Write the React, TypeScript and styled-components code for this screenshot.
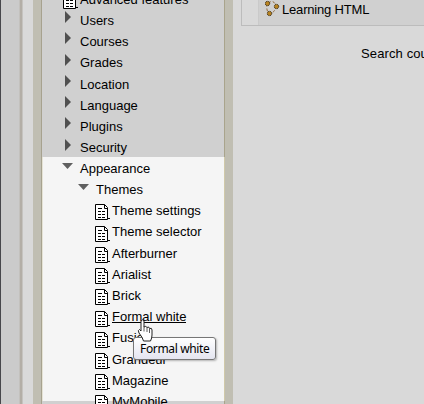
import React from "react";
import styled, { createGlobalStyle } from "styled-components";

const GlobalStyle = createGlobalStyle`
  body { margin: 0; overflow: hidden; }
`;

const Page = styled.div`
  display: flex;
  position: relative;
  width: 424px;
  height: 404px;
  overflow: hidden;
  background: #d9d9d9;
  color: #000;
  font: 13px/21px "Liberation Sans", Arial, sans-serif;
`;

const Strip = styled.div<{ $width: number; $fill: string }>`
  flex: 0 0 ${(p) => p.$width}px;
  background: ${(p) => p.$fill};
`;

const Sidebar = styled.nav`
  flex: 0 0 181px;
  height: 404px;
  overflow: hidden;
  background: #d0d0d0;
`;

const Branch = styled.div`
  margin-top: -12px;
  height: 169px;
`;

const OpenBranch = styled.div`
  height: 247px;
  overflow: hidden;
  background: linear-gradient(#f5f5f5 244px, #d0d0d0 244px);
`;

const Row = styled.div<{ $indent: number }>`
  display: flex;
  height: 21.22px;
  padding-left: ${(p) => p.$indent}px;
  white-space: nowrap;
`;

const IconSlot = styled.span<{ $width: number; $top: number }>`
  flex: 0 0 ${(p) => p.$width}px;
  padding-top: ${(p) => p.$top}px;
  line-height: 0;
`;

const Label = styled.span<{ $underline?: boolean }>`
  height: ${(p) => (p.$underline ? "17px" : "21px")};
  margin-top: 0.7px;
  box-sizing: border-box;
  border-bottom: ${(p) => (p.$underline ? "1px solid #000" : "0")};
`;

const Main = styled.main`
  flex: 1;
  padding-left: 8px;
  overflow: hidden;
`;

const Course = styled.div`
  display: flex;
  box-sizing: border-box;
  height: 26px;
  border: solid #bcbcbc;
  border-width: 0 0 1px 1px;
`;

const CourseCell = styled.div`
  display: flex;
  flex: 1;
  margin-left: 16px;
  padding-left: 6px;
  border-left: 1px solid #cacaca;
  background: #d0d0d0;
`;

const CourseName = styled.span`
  padding-left: 1px;
  margin-top: -1px;
  letter-spacing: -0.18px;
`;

const Search = styled.div`
  padding: 17px 0 0 120px;
  white-space: nowrap;
  letter-spacing: 0.12px;
`;

const Tooltip = styled.div`
  position: absolute;
  left: 133px;
  top: 337px;
  box-sizing: border-box;
  width: 83px;
  height: 23px;
  padding-left: 6px;
  border: 1px solid #767676;
  border-radius: 3px;
  background: linear-gradient(#fff, #e4e5f0);
  box-shadow: 1px 1px 2px #0004;
  font: 12px/22px "Noto Sans", sans-serif;
  letter-spacing: -0.35px;
  white-space: nowrap;
`;

const Pointer = styled.svg`
  position: absolute;
  left: 136px;
  top: 318px;
`;

const PageIcon = () => (
  <svg width="15" height="16" viewBox="0 0 15 16">
    <path d="M.5.5H9.5L12.5 3.5V15.5H.5Z" fill="#fff" stroke="#000" />
    <path d="M9.5.5V4.5H12.5M12 14.5H15" fill="none" stroke="#000" />
    <path d="M3 4.5h4M3 7.5h3M7 7.5h3M3 10.5h3M7 10.5h3M3 13.5h3M7 13.5h3" stroke="#000" />
  </svg>
);

const Closed = () => (
  <svg width="6" height="12"><path d="M0 0L6 6L0 12z" fill="#505050" /></svg>
);

const Opened = () => (
  <svg width="11" height="6"><path d="M0 0h11L5.5 6z" fill="#606060" /></svg>
);

const CourseIcon = () => (
  <svg width="16" height="17" viewBox="0 0 16 17">
    <path d="M3 3Q9-1 11 6Q10 13 4 14Q1 10 2 4" fill="none" stroke="#926b3d" strokeDasharray="3 2" />
    <g fill="#b88320" stroke="#2c210f" strokeDasharray="1 .6">
      <circle cx="2.5" cy="3.5" r="2.2" />
      <circle cx="11.5" cy="6.5" r="2.2" />
      <circle cx="4.5" cy="13.5" r="2.2" />
    </g>
  </svg>
);

const categories = ["Users", "Courses", "Grades", "Location", "Language", "Plugins", "Security"];
const themes = ["Theme settings", "Theme selector", "Afterburner", "Arialist", "Brick", "Formal white", "Fusion", "Grandeur", "Magazine", "MyMobile"];

export default function App() {
  return (
    <>
      <GlobalStyle />
      <Page>
        <Strip $width={1} $fill="#47474b" />
        <Strip $width={18} $fill="#cbcbcb" />
        <Strip $width={4} $fill="linear-gradient(90deg, #c3c1bd 1px, #b3aea6 1px 3px, #c5c3bf 3px)" />
        <Strip $width={10} $fill="#d9d9d9" />
        <Strip $width={8} $fill="#c0beb2" />
        <Strip $width={1} $fill="#a7a28f" />
        <Strip $width={1} $fill="linear-gradient(#d0d0d0 157px, #e5e3d5 157px 401px, #d0d0d0 401px)" />
        <Sidebar>
          <Branch>
            <Row $indent={20}>
              <IconSlot $width={17} $top={5}><PageIcon /></IconSlot>
              <Label>Advanced features</Label>
            </Row>
            {categories.map((name) => (
              <Row key={name} $indent={22}>
                <IconSlot $width={15} $top={2}><Closed /></IconSlot>
                <Label>{name}</Label>
              </Row>
            ))}
          </Branch>
          <OpenBranch>
            <Row $indent={19}>
              <IconSlot $width={18} $top={6}><Opened /></IconSlot>
              <Label>Appearance</Label>
            </Row>
            <Row $indent={35}>
              <IconSlot $width={18} $top={6}><Opened /></IconSlot>
              <Label>Themes</Label>
            </Row>
            {themes.map((name) => (
              <Row key={name} $indent={52}>
                <IconSlot $width={17} $top={5}><PageIcon /></IconSlot>
                <Label $underline={name === "Formal white"}>{name}</Label>
              </Row>
            ))}
          </OpenBranch>
        </Sidebar>
        <Strip $width={1} $fill="linear-gradient(#a9a48c 157px, #d0c9a9 157px 401px, #a9a48c 401px)" />
        <Strip $width={8} $fill="#c0beb2" />
        <Main>
          <Course>
            <CourseCell>
              <IconSlot $width={16} $top={0}><CourseIcon /></IconSlot>
              <CourseName>Learning HTML</CourseName>
            </CourseCell>
          </Course>
          <Search>Search courses:</Search>
        </Main>
        <Tooltip>Formal white</Tooltip>
        <Pointer width="18" height="25" viewBox="0 0 18 25">
          <path d="M5 13V3Q6.5.5 8 3V9Q10 7.5 11 9.5Q13 8 13.5 10.5Q16 9.5 16 12V17Q16 20 14.5 23H7.5Q7 20 3 15Q1.5 12 3.5 11.5Z" fill="#fff" stroke="#222" />
          <path d="M8 8.5v5M11 10v4M13.5 11v4" fill="none" stroke="#333" strokeWidth=".8" />
        </Pointer>
      </Page>
    </>
  );
}
